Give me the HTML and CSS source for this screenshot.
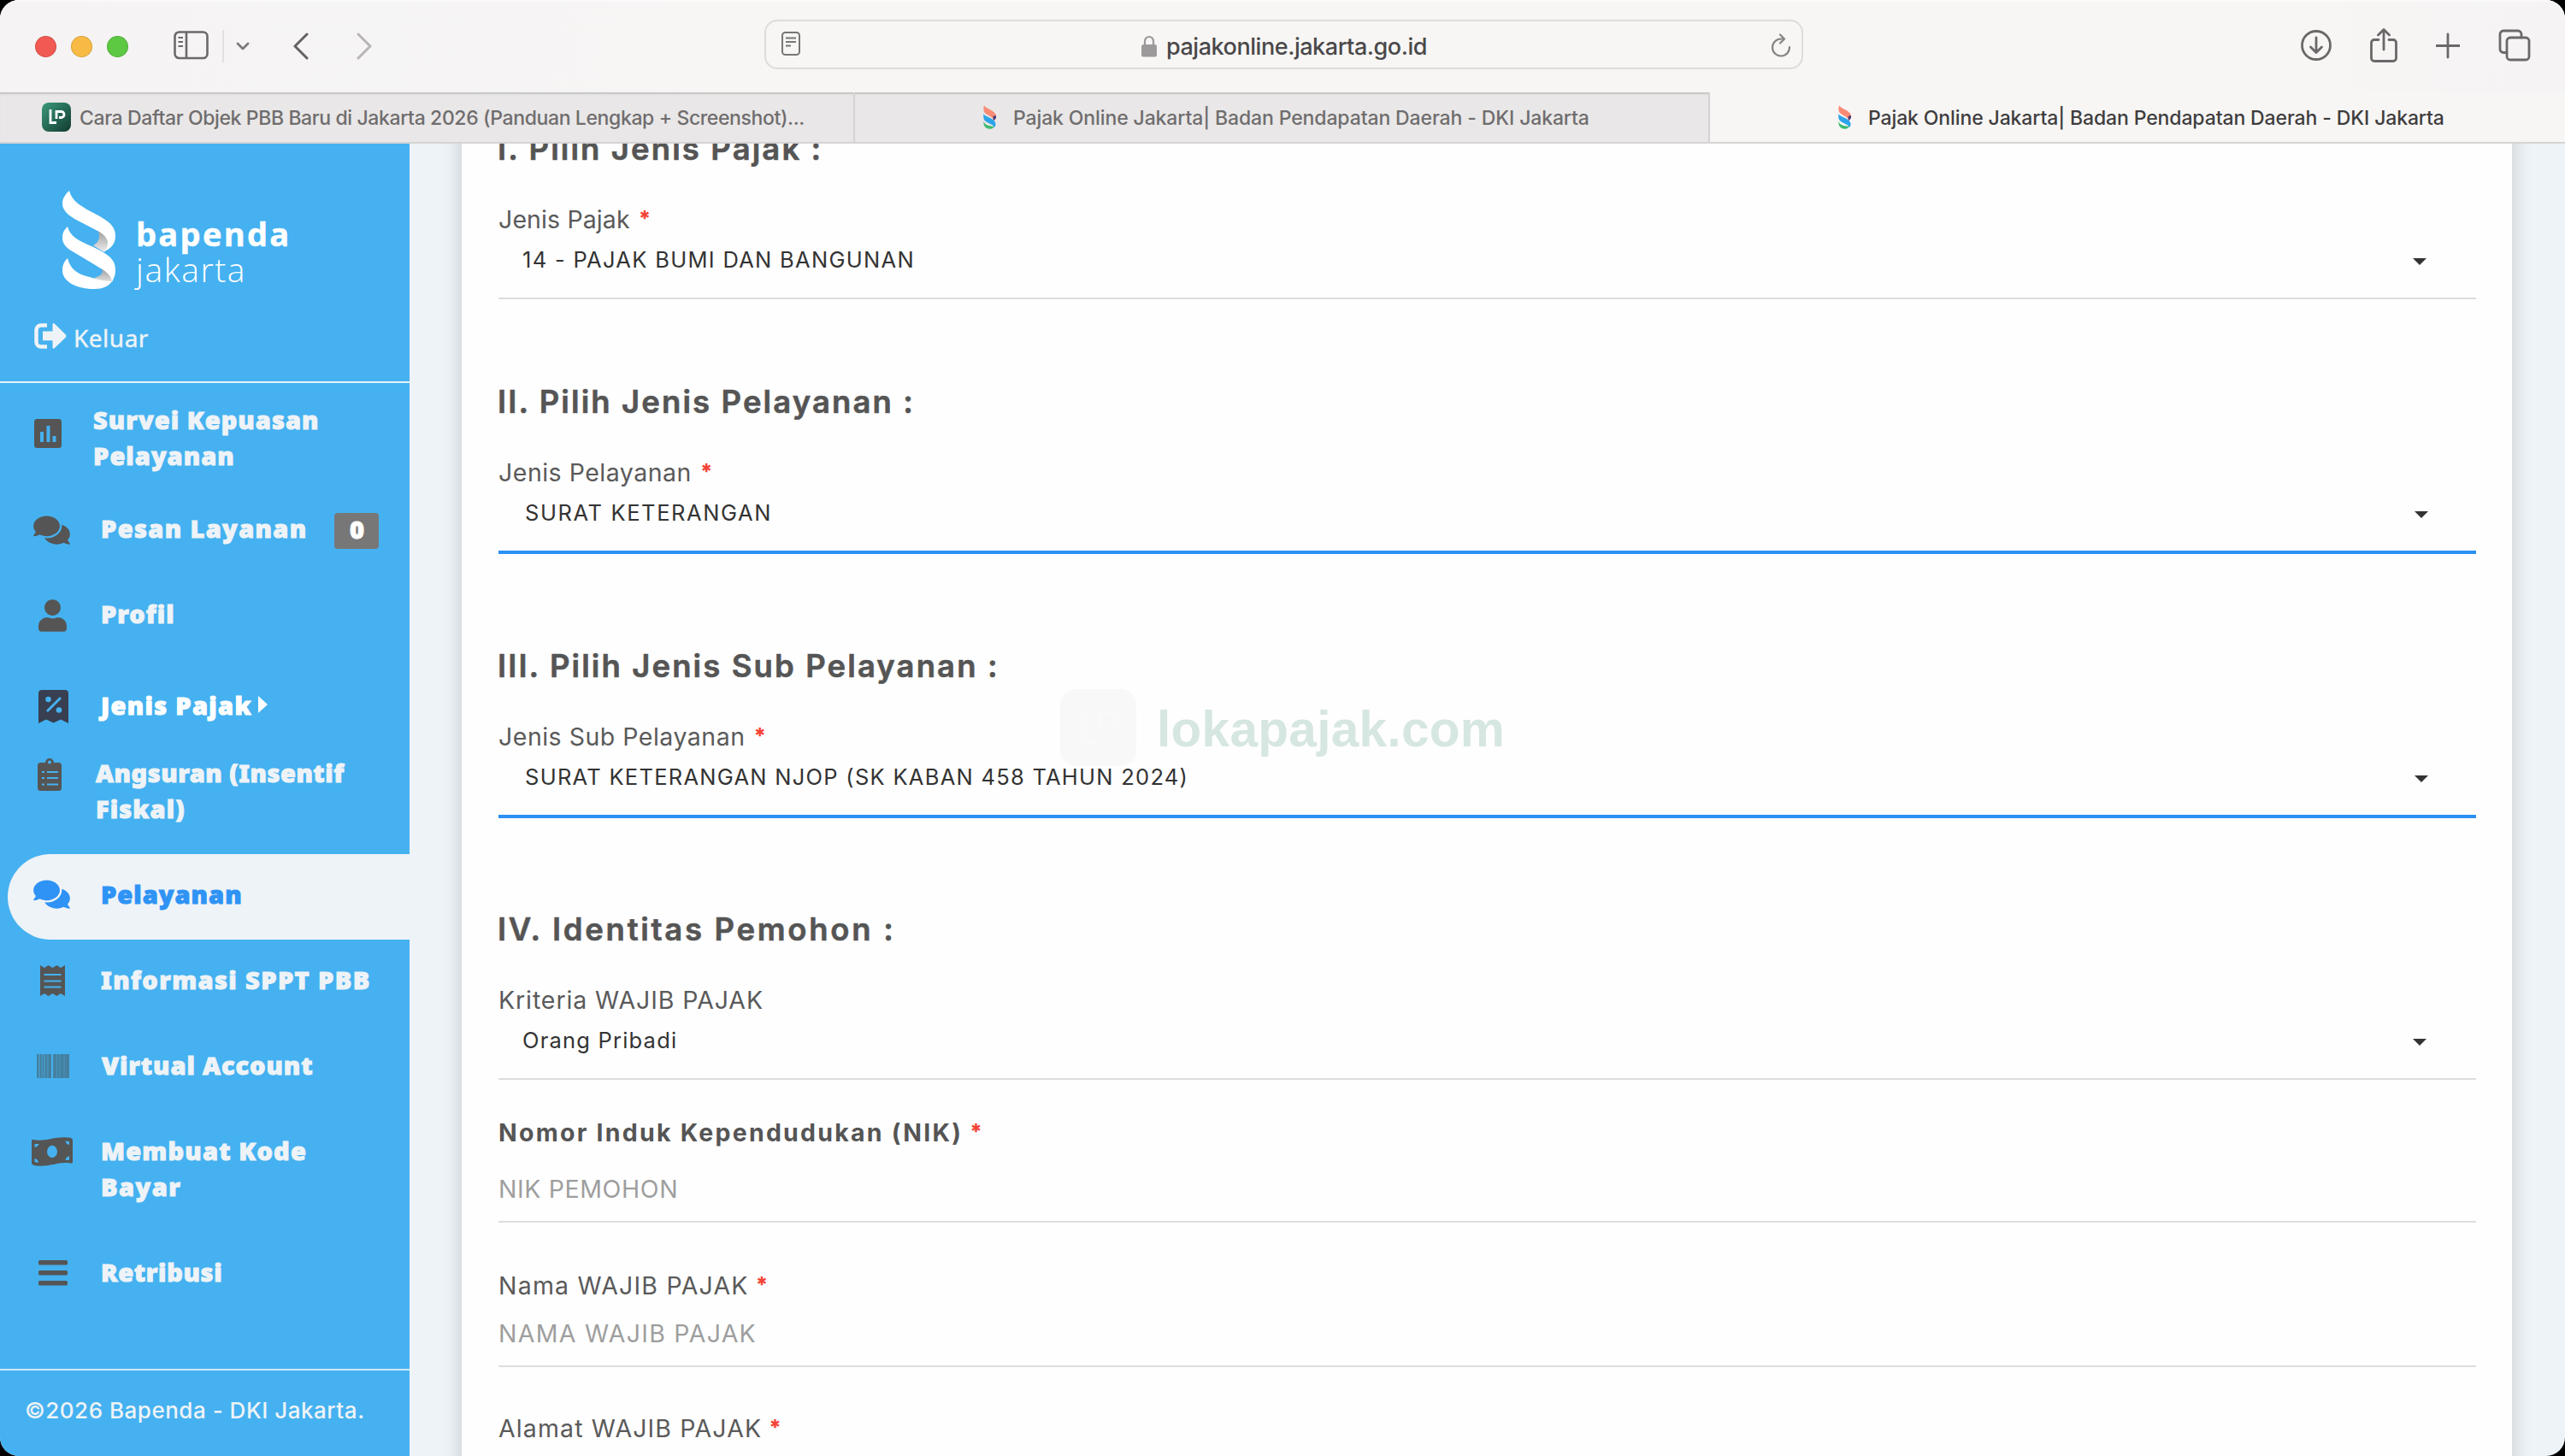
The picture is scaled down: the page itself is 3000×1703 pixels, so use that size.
FILE: index.html
```html
<!DOCTYPE html>
<html lang="id">
<head>
<meta charset="utf-8">
<title>Pajak Online Jakarta| Badan Pendapatan Daerah - DKI Jakarta</title>
<link rel="stylesheet" href="styles.css">
</head>
<body>
<svg width="0" height="0" class="defs" aria-hidden="true">
  <defs>
    <symbol id="comments" viewBox="0 0 576 512"><path d="M416 192c0-88.4-93.1-160-208-160S0 103.6 0 192c0 34.3 14.1 65.9 38 92-13.4 30.2-35.5 54.2-35.8 54.5-2.2 2.3-2.8 5.7-1.5 8.7S4.8 352 8 352c36.6 0 66.9-12.3 88.7-25 32.2 15.7 70.3 25 111.3 25 114.9 0 208-71.6 208-160zm122 220c23.9-26 38-57.7 38-92 0-66.9-53.5-124.2-129.3-148.1.9 6.6 1.3 13.3 1.3 20.1 0 105.9-107.7 192-240 192-10.8 0-21.3-.8-31.7-1.9C207.8 439.6 281.8 480 368 480c41 0 79.1-9.2 111.3-25 21.8 12.7 52.1 25 88.7 25 3.2 0 6.1-1.9 7.3-4.8 1.3-2.9.7-6.3-1.5-8.7-.3-.3-22.4-24.2-35.8-54.5z"/></symbol>
    <symbol id="favicon" viewBox="0 0 17 28">
      <path fill="#f98a76" d="M2 0C3 4 16 6 16 13c0 2-1 4-3 5 0-4-5-5-9-8C1 8 1 4 2 0z"/>
      <path fill="#4a3a78" d="M12.500 13l3.500-1c.5 3-1 5-3 6z"/>
      <path fill="#2da4e8" d="M1.500 10c1 4 14 5 14 12 0 2-.5 3-1.500 4-2-4-6-4-10-7-3-2-3-6-2.500-9z"/>
      <path fill="#3dbb70" d="M1.500 19c2 5 6 5 12.500 6-2 3-6 3.500-9 2-3-1.500-4-5-3.500-8z"/>
    </symbol>
  </defs>
</svg>

<div class="window">
  <header class="toolbar">
    <div class="lights"><i class="red"></i><i class="yellow"></i><i class="green"></i></div>
    <svg class="panel-icon" width="42" height="34" viewBox="0 0 42 34" fill="none" stroke="#6b696a" stroke-width="2.600"><rect x="1.500" y="1.500" width="38" height="30.500" rx="5"/><path d="M15 2v30"/><path d="M5.500 8h5.500M5.500 13h5.500M5.500 18h5.500" stroke-width="2"/></svg>
    <span class="divider"></span>
    <svg class="menu-icon" width="16" height="10" viewBox="0 0 16 10" fill="none" stroke="#7c7a7b" stroke-width="2.800" stroke-linecap="round" stroke-linejoin="round"><path d="M2 2l6 6 6-6"/></svg>
    <svg class="back-icon" width="19" height="32" viewBox="0 0 19 32" fill="none" stroke="#636162" stroke-width="3" stroke-linecap="round" stroke-linejoin="round"><path d="M17 2L3 16l14 14"/></svg>
    <svg class="next-icon" width="19" height="32" viewBox="0 0 19 32" fill="none" stroke="#b7b5b6" stroke-width="3" stroke-linecap="round" stroke-linejoin="round"><path d="M2 2l14 14L2 30"/></svg>
    <div class="address">
      <svg class="reader-icon" width="22" height="28" viewBox="0 0 22 28" fill="none" stroke="#777" stroke-width="2"><rect x="1" y="1" width="20" height="26" rx="3.500"/><path d="M5 7.500h12M5 12h12M5 16.500h6"/></svg>
      <div class="host">
        <svg width="18" height="26" viewBox="0 0 18 26"><path d="M4 12V7.500a5 5.500 0 0 1 10 0V12" fill="none" stroke="#9b999a" stroke-width="2.200"/><rect y="11" width="18" height="14.500" rx="2.500" fill="#9b999a"/></svg>
        <span>pajakonline.jakarta.go.id</span>
      </div>
      <svg class="reload-icon" width="24" height="28" viewBox="0 0 24 28" fill="none" stroke="#868485" stroke-width="2.200" stroke-linecap="round" stroke-linejoin="round"><path d="M22 16A10 10 0 1 1 12 6.500h2"/><path d="M11 1.500l5 5-5 5"/></svg>
    </div>
    <div class="actions">
      <svg width="36" height="38" viewBox="0 0 36 38"><circle cx="18" cy="19" r="16.500"/><path d="M18 10v17M11.500 21l6.500 6.500 6.500-6.500"/></svg>
      <svg width="32" height="40" viewBox="0 0 32 40"><path d="M10 13.500H5a3.500 3.500 0 0 0-3.500 3.500v18A3.500 3.500 0 0 0 5 38.500h22a3.500 3.500 0 0 0 3.500-3.500V17a3.500 3.500 0 0 0-3.500-3.500h-5M16 25V2M9.500 8L16 1.500 22.500 8"/></svg>
      <svg width="28" height="38" viewBox="0 0 28 38"><path d="M14 6v27M.5 19.500h27"/></svg>
      <svg width="38" height="38" viewBox="0 0 38 38"><rect x="10" y="10" width="26" height="26" rx="4"/><path d="M10 27.500H6a4 4 0 0 1-4-4V6a4 4 0 0 1 4-4h17a4 4 0 0 1 4 4v4"/></svg>
    </div>
  </header>

  <nav class="tabs">
    <div class="tab tab-guide">
      <svg width="34" height="34" viewBox="0 0 34 34"><defs><linearGradient id="lp" x1="0" y1="0" x2="1" y2="1"><stop offset="0" stop-color="#3b9a7b"/><stop offset="1" stop-color="#123a30"/></linearGradient></defs><rect width="34" height="34" rx="8" fill="url(#lp)"/><path d="M10 8v15.500h7M17 19v-8.500h5.500a3.500 3.500 0 0 1 0 7H20" fill="none" stroke="#fff" stroke-width="2.800"/></svg>
      <span>Cara Daftar Objek PBB Baru di Jakarta 2026 (Panduan Lengkap + Screenshot)...</span>
    </div>
    <div class="tab tab-site"><svg width="17" height="28"><use href="#favicon"/></svg><span>Pajak Online Jakarta| Badan Pendapatan Daerah - DKI Jakarta</span></div>
    <div class="tab tab-site active"><svg width="17" height="28"><use href="#favicon"/></svg><span>Pajak Online Jakarta| Badan Pendapatan Daerah - DKI Jakarta</span></div>
  </nav>

  <div class="page">
    <aside class="sidebar">
      <div class="brand">
        <div class="logo">
          <svg width="63" height="115" viewBox="0 0 63 115">
            <defs>
              <linearGradient id="fold" x1="0" y1="0" x2="0" y2="1"><stop offset="0" stop-color="#999"/><stop offset="1" stop-color="#eee"/></linearGradient>
            </defs>
            <path fill="url(#fold)" d="M41 46c4 8 2 14-5 18l13 8 8-12-4-10z"/>
            <path fill="url(#fold)" d="M45 90c4 5 1 10-8 12l12 8 10-4-3-10z"/>
            <path fill="#fff" d="M8 0c3 13 15 19 32 28 15 8 22 14 22 25 0 8-4 14-13 18 7-9 5-16-6-23L16 34C5 28 0 22 0 15 0 9 3 5 8 0z"/>
            <path fill="#fff" d="M6 42c3 12 14 17 28 23 18 8 28 15 28 27 0 6-1 10-4 14-2-9-8-12-18-18L15 73C4 67 0 62 0 55c0-6 2-9 6-13z"/>
            <path fill="#fff" d="M6 79c3 12 11 18 22 21 10 3 21 6 30 6-4 6-11 9-20 9C17 115 0 107 0 93c0-6 2-10 6-14z"/>
          </svg>
          <div class="wordmark"><span class="bapenda">bapenda</span><span class="jakarta">jakarta</span></div>
        </div>
        <a class="logout">
          <svg width="38" height="30" viewBox="0 0 38 30"><path d="M15 2.500H8A5.500 5.500 0 0 0 2.500 8v14A5.500 5.500 0 0 0 8 27.500h7" fill="none" stroke="#eef3f7" stroke-width="4.500"/><path d="M10 9.500h11.500V1.500c0-1.500 1.200-2 2.200-1L37 13.500q1 1.500 0 3L23.700 29.300c-1 1-2.200.7-2.200-1v-8H10z" fill="#eef3f7"/></svg>
          <span>Keluar</span>
        </a>
      </div>

      <ul class="menu">
        <li class="item survei">
          <svg width="32" height="34" viewBox="0 0 32 34"><rect width="32" height="34" rx="3.500"/><path d="M9 15v12M16.500 8v19M23.500 20v7" stroke="#45b1f0" stroke-width="4"/></svg>
          <div><span class="l1">Survei Kepuasan</span><span class="l2">Pelayanan</span></div>
        </li>
        <li class="item pesan"><svg width="43" height="38"><use href="#comments"/></svg><div><span>Pesan Layanan</span></div><b class="badge">0</b></li>
        <li class="item profil"><svg width="33" height="38" viewBox="0 0 448 512"><path d="M224 256c70.700 0 128-57.300 128-128S294.700 0 224 0 96 57.300 96 128s57.300 128 128 128zm89.600 32h-16.700c-22.200 10.200-46.900 16-72.900 16s-50.600-5.800-72.900-16h-16.700C60.200 288 0 348.200 0 422.400V464c0 26.500 21.500 48 48 48h352c26.500 0 48-21.500 48-48v-41.600c0-74.200-60.200-134.400-134.400-134.400z"/></svg><div><span>Profil</span></div></li>
        <li class="item jenis"><svg width="35" height="39" viewBox="0 0 35 39"><path fill="#373f50" d="M4 0h27q4 0 4 4v35l-9-4.500-8.500 4-8.500-4L0 39V4q0-4 4-4z"/><path d="M10 25L26 9" stroke="#45b1f0" stroke-width="3"/><circle cx="11.500" cy="11" r="3.300" fill="#45b1f0"/><circle cx="24" cy="23.500" r="3.300" fill="#45b1f0"/></svg><div><span>Jenis Pajak</span></div><i class="caret-right"></i></li>
        <li class="item angsuran">
          <svg width="28" height="38" viewBox="0 0 28 38"><path d="M3.500 5H9a5 5 0 0 1 10 0h5.500Q28 5 28 8.500v26q0 3.500-3.500 3.500h-21Q0 38 0 34.500v-26Q0 5 3.500 5z"/><circle cx="14" cy="4.500" r="2" fill="#45b1f0"/><path d="M5 16h3M11 16h13M5 23h3M11 23h13M5 30.500h3M11 30.500h13" stroke="#45b1f0" stroke-width="2.200"/></svg>
          <div><span class="l1">Angsuran (Insentif</span><span class="l2">Fiskal)</span></div>
        </li>
        <li class="item pelayanan"><svg width="43" height="38"><use href="#comments"/></svg><div><span>Pelayanan</span></div></li>
        <li class="item informasi"><svg width="29" height="36" viewBox="0 0 29 36"><path d="M0 0l5 3 4.500-3 5 3 5-3L24 3l5-3v36l-5-3-4.500 3-5-3-5 3L5 33l-5 3z"/><path d="M4.500 11h20M4.500 18.500h20M4.500 25.500h20" stroke="#45b1f0" stroke-width="2"/></svg><div><span>Informasi SPPT PBB</span></div></li>
        <li class="item virtual"><svg width="38" height="28" viewBox="0 0 38 28"><path fill="#45809f" d="M0 0h2v28H0zM4 0h1.500v28H4zM7 0h1v28H7zM10 0h2v28h-2zM13.500 0H17v28h-3.500zM19 0h4v28h-4zM24 0h2.500v28H24zM27.500 0h4v28h-4zM32.500 0h5.500v28h-5.500z"/><path fill="#45809f" opacity=".55" d="M0 0h17v28H0zM19 0h19v28H19z"/></svg><div><span>Virtual Account</span></div></li>
        <li class="item membuat">
          <svg width="48" height="34" viewBox="0 0 48 34"><path d="M0 4.500C0 3 1 2.700 3 3.200 17 5.500 29-2 45 .8q3 .7 3 3V29c0 1.500-1 2-3 1.600C31 28 19 36.500 3 33q-3-.7-3-3z"/><ellipse cx="24" cy="17" rx="6" ry="7.200" fill="#45b1f0"/><path fill="#45b1f0" d="M3.500 8h5q-1 3.500-5 4zM39.500 4.500l4.500.5v4q-4-.5-4.500-4.500zM3.500 25q4 .5 4.500 5l-4.500-1zM44 22v5h-4.500q.5-4 4.500-5z"/></svg>
          <div><span class="l1">Membuat Kode</span><span class="l2">Bayar</span></div>
        </li>
        <li class="item retribusi"><svg width="34" height="30" viewBox="0 0 34 30"><rect width="34" height="5.500" rx="1.500"/><rect y="12" width="34" height="5.500" rx="1.500"/><rect y="24" width="34" height="5.500" rx="1.500"/></svg><div><span>Retribusi</span></div></li>
      </ul>
      <footer class="copyright"><span>©2026 Bapenda - DKI Jakarta.</span></footer>
    </aside>

    <main class="content">
      <form class="card">
        <h2 class="first">I. Pilih Jenis Pajak :</h2>
        <label class="jp"><span>Jenis Pajak</span><em>*</em></label>
        <div class="select"><span class="v-bumi">14 - PAJAK BUMI DAN BANGUNAN</span><i class="caret"></i></div>

        <h2 class="second">II. Pilih Jenis Pelayanan :</h2>
        <label class="jpl"><span>Jenis Pelayanan</span><em>*</em></label>
        <div class="select focus"><span class="v-surat">SURAT KETERANGAN</span><i class="caret"></i></div>

        <h2 class="third">III. Pilih Jenis Sub Pelayanan :</h2>
        <label class="jsp"><span>Jenis Sub Pelayanan</span><em>*</em></label>
        <div class="select focus"><span class="v-njop">SURAT KETERANGAN NJOP (SK KABAN 458 TAHUN 2024)</span><i class="caret"></i></div>

        <h2 class="fourth">IV. Identitas Pemohon :</h2>
        <label class="krit"><span>Kriteria WAJIB PAJAK</span></label>
        <div class="select"><span class="v-orang">Orang Pribadi</span><i class="caret"></i></div>

        <label class="nik"><span>Nomor Induk Kependudukan (NIK)</span><em>*</em></label>
        <div class="input in-nik"><span>NIK PEMOHON</span></div>
        <label class="nama"><span>Nama WAJIB PAJAK</span><em>*</em></label>
        <div class="input in-nama"><span>NAMA WAJIB PAJAK</span></div>
        <label class="alamat"><span>Alamat WAJIB PAJAK</span><em>*</em></label>
      </form>
    </main>
  </div>

  <div class="watermark">
    <svg width="89" height="90" viewBox="0 0 89 90"><rect width="89" height="90" rx="19" fill="#777" fill-opacity=".045"/><path d="M29 21v40h17M46 50V27h13a9 9 0 0 1 0 18h-6" fill="none" stroke="#fff" stroke-opacity=".15" stroke-width="7"/></svg>
    <span>lokapajak.com</span>
  </div>
</div>
</body>
</html>
```
FILE: styles.css
```css
* { box-sizing: border-box; }
html, body { margin: 0; background: #000; }
body { width: 3000px; height: 1703px; overflow: hidden; font-family: Inter, "Noto Sans", sans-serif; }
svg { display: block; flex: none; }
.defs { position: absolute; }

.window {
  position: relative;
  display: flex;
  flex-direction: column;
  width: 3000px;
  height: 1703px;
  border-radius: 22px;
  overflow: hidden;
  background: #eef3f7;
}

/* Browser toolbar */
.toolbar {
  display: flex;
  align-items: center;
  height: 108px;
  padding-left: 41px;
  background: linear-gradient(90deg, #f5f3f4, #f7f6f5 30%, #f7f6f4 90%, #f5f3f4);
  box-shadow: inset 0 2px 0 #fbfafa;
}
.lights { display: flex; gap: 17px; }
.lights i { width: 25px; height: 25px; border-radius: 50%; border: 1px solid #0002; }
.red { background: #f05a52; }
.yellow { background: #f7bb45; }
.green { background: #5dc842; }
.panel-icon { margin-left: 53px; margin-top: -2px; }
.divider { width: 2px; height: 38px; margin-left: 15px; background: #e2e0e1; }
.menu-icon { margin-left: 14px; }
.back-icon { margin-left: 50px; }
.next-icon { margin-left: 56px; }
.address {
  display: flex;
  align-items: center;
  justify-content: space-between;
  width: 1215px;
  height: 58px;
  margin-left: 458px;
  margin-top: -4px;
  padding: 0 12px 0 18px;
  border: 2px solid #dddcdb;
  border-radius: 15px;
}
.reader-icon { margin-top: -2px; }
.reload-icon { margin-top: 1px; }
.host { display: flex; align-items: center; gap: 11px; margin-left: -3px; color: #4a4849; font-size: 27px; font-weight: 500; letter-spacing: -.45px; line-height: 50px; padding-top: 4px; }
.host span { padding-top: 2px; }
.host svg { margin-top: -1px; }
.actions { display: flex; align-items: center; gap: 45px; margin-left: 582px; margin-top: -2px; fill: none; stroke: #6a6869; stroke-width: 2.800; stroke-linecap: round; stroke-linejoin: round; }

/* Tab strip */
.tabs { display: flex; flex: none; height: 60px; border-bottom: 2px solid #d5d4d3; position: relative; background: #f7f6f5; }
.tab { display: flex; align-items: center; width: 1000px; padding-bottom: 1px; color: #6f6d6e; font-size: 23px; font-weight: 500; background: #e9e7e7; border-right: 2px solid #d5d3d3; box-shadow: inset 0 3px 2px -1px #c4c3c3; white-space: nowrap; }
.tab span { padding-top: 2px; }
.tab-guide { padding-left: 49px; letter-spacing: -.38px; }
.tab-guide span { margin-left: 10px; }
.tab-site { padding-left: 149px; letter-spacing: -.12px; }
.tab-site span { margin-left: 19px; }
.tab.active { background: #f7f6f5; color: #3f3d3e; border: 0; box-shadow: none; }

/* Page */
.page { display: flex; flex: 1; min-height: 0; }
.sidebar { display: flex; flex-direction: column; width: 479px; background: #45b1f0; }
.brand { flex: none; height: 280px; padding: 55px 0 0 40px; border-bottom: 2px solid #e4f1fa; }
.logo { display: flex; height: 115px; padding-left: 33px; }
.wordmark { display: flex; flex-direction: column; margin-left: 23px; color: #fff; font-family: "Open Sans", sans-serif; line-height: 42px; }
.bapenda { margin-top: 29px; font-size: 38px; font-weight: 700; letter-spacing: 2.300px; -webkit-text-stroke: .5px; }
.jakarta { font-size: 39px; font-weight: 300; letter-spacing: 1.600px; }
.logout { display: flex; height: 42px; margin-top: 36px; color: #eef3f7; font: 400 28px/42px "Noto Sans", sans-serif; letter-spacing: .5px; -webkit-text-stroke: .4px; }
.logout svg { margin-top: 4px; }
.logout span { margin-left: 8px; }

.menu { flex: none; height: 1153px; margin: 0; padding: 0; list-style: none; }
.item { display: flex; align-items: flex-start; fill: #555; color: #eef3f7; font: 900 29px/42px "Noto Sans", sans-serif; white-space: nowrap; }
.item div { display: flex; flex-direction: column; align-items: flex-start; margin-top: -1px; -webkit-text-stroke: 1px; }
.survei { padding: 23px 0 0 40px; height: 107px; }
.survei svg { margin-top: 19px; }
.survei div { margin-left: 37px; letter-spacing: 1.050px; }
.pesan { margin-top: 43px; padding-left: 39px; height: 42px; }
.pesan svg { margin-top: 3px; }
.pesan div { margin-left: 36px; letter-spacing: 1.360px; }
.badge { width: 52px; height: 42px; margin: 2px 0 0 31px; border-radius: 4px; background: #777; color: #fff; text-align: center; line-height: 38px; -webkit-text-stroke: 1px; padding-left: 2px; }
.profil { margin-top: 58px; padding-left: 45px; height: 42px; }
.profil svg { margin-top: 3px; }
.profil div { margin-left: 40px; letter-spacing: 1.000px; }
.jenis { margin-top: 65px; padding-left: 45px; height: 42px; color: #fff; }
.jenis svg { margin-top: 2px; }
.jenis div { margin-left: 38px; letter-spacing: 1.300px; }
.caret-right { margin: 9px 0 0 7px; border-left: 11px solid #fff; border-top: 10px solid transparent; border-bottom: 10px solid transparent; }
.angsuran { margin-top: 37px; padding-left: 44px; height: 84px; }
.angsuran svg { margin-top: 3px; }
.angsuran div { margin-left: 40px; letter-spacing: .520px; }
.angsuran .l2 { letter-spacing: 1.100px; }
.pelayanan { height: 100px; margin: 31px 0 0 9px; padding: 27px 0 0 30px; border-radius: 50px 0 0 50px; background: #eef3f7; color: #2f93f5; fill: #2f93f5; }
.pelayanan svg { margin-top: 1px; }
.pelayanan div { margin-left: 36px; letter-spacing: 1.030px; }
.informasi { margin-top: 27px; padding-left: 47px; height: 42px; }
.informasi svg { margin-top: 3px; }
.informasi div { margin-left: 42px; letter-spacing: 1.380px; }
.virtual { margin-top: 58px; padding-left: 43px; height: 42px; }
.virtual svg { margin-top: 7px; }
.virtual div { margin-left: 38px; letter-spacing: .900px; }
.membuat { margin-top: 58px; padding-left: 37px; height: 84px; }
.membuat svg { margin-top: 4px; }
.membuat div { margin-left: 33px; letter-spacing: 1.170px; }
.membuat .l2 { letter-spacing: 1.500px; }
.retribusi { margin-top: 58px; padding-left: 45px; height: 42px; }
.retribusi svg { margin-top: 6px; }
.retribusi div { margin-left: 39px; letter-spacing: .650px; }
.copyright { flex: 1; padding: 28px 0 0 29px; border-top: 2px solid #cfe8f8; color: #eef3f7; font-size: 26px; font-weight: 500; line-height: 38px; letter-spacing: .510px; }

/* Form card */
.content { flex: 1; min-width: 0; padding: 0 62px 0 61px; overflow: hidden; }
.card { display: flex; flex-direction: column; width: 2398px; height: 1600px; margin-top: -30px; padding: 12px 42px 0 43px; background: #fefefe; box-shadow: 0 0 22px #0000002e; }
.card h2 { flex: none; height: 48px; margin: 0 0 41px -1px; color: #555; font-size: 36.500px; font-weight: 600; line-height: 48px; letter-spacing: 2.100px; -webkit-text-stroke: .6px; }
.card .second { margin-top: 96px; }
.card .third { margin-top: 107px; }
.card .fourth { margin-top: 106px; letter-spacing: 2.700px; }
label { display: flex; flex: none; height: 34px; color: #5a5a5a; font-size: 28.500px; line-height: 35px; white-space: nowrap; }
label em { margin-left: 10px; color: #f44336; font-style: normal; font-weight: 800; font-size: 25px; line-height: 32px; letter-spacing: 0; }
.jp { letter-spacing: .120px; }
.jpl, .jsp { letter-spacing: .500px; }
.krit { letter-spacing: .900px; }
.nik { margin-top: 44px; color: #555; font-weight: 700; letter-spacing: 2.240px; }
.nik em, .nama em, .alamat em { margin-left: 8px; }
.nama { margin-top: 56px; letter-spacing: 1.200px; }
.alamat { margin-top: 54px; letter-spacing: 1.130px; }
.select { display: flex; flex: none; justify-content: space-between; height: 77px; padding: 0 58px 15px 28px; border-bottom: 2px solid #ddd; color: #333; font-size: 25.500px; line-height: 61px; }
.select.focus { height: 79px; padding: 0 56px 15px 31px; border-bottom: 4px solid #2c90f5; }
.caret { margin-top: 29px; width: 16px; height: 8px; background: #333; clip-path: polygon(0 0, 100% 0, 50% 100%); }
.v-bumi { letter-spacing: 1.300px; }
.v-surat { letter-spacing: 1.600px; }
.v-njop { letter-spacing: 1.270px; }
.v-orang { letter-spacing: 1.200px; }
.input { flex: none; height: 70px; border-bottom: 2px solid #ddd; color: #9e9e9e; font-size: 28.500px; line-height: 61px; }
.in-nik { margin-top: 19px; letter-spacing: .600px; }
.in-nama { margin-top: 9px; letter-spacing: 1.280px; }

/* Watermark laid over the form */
.watermark { position: absolute; left: 1240px; top: 806px; display: flex; color: #1f7a5c2e; font: 700 58.500px/90px "Liberation Sans", Arial, sans-serif; letter-spacing: .300px; }
.watermark span { margin-left: 24px; margin-top: 2px; }
```
